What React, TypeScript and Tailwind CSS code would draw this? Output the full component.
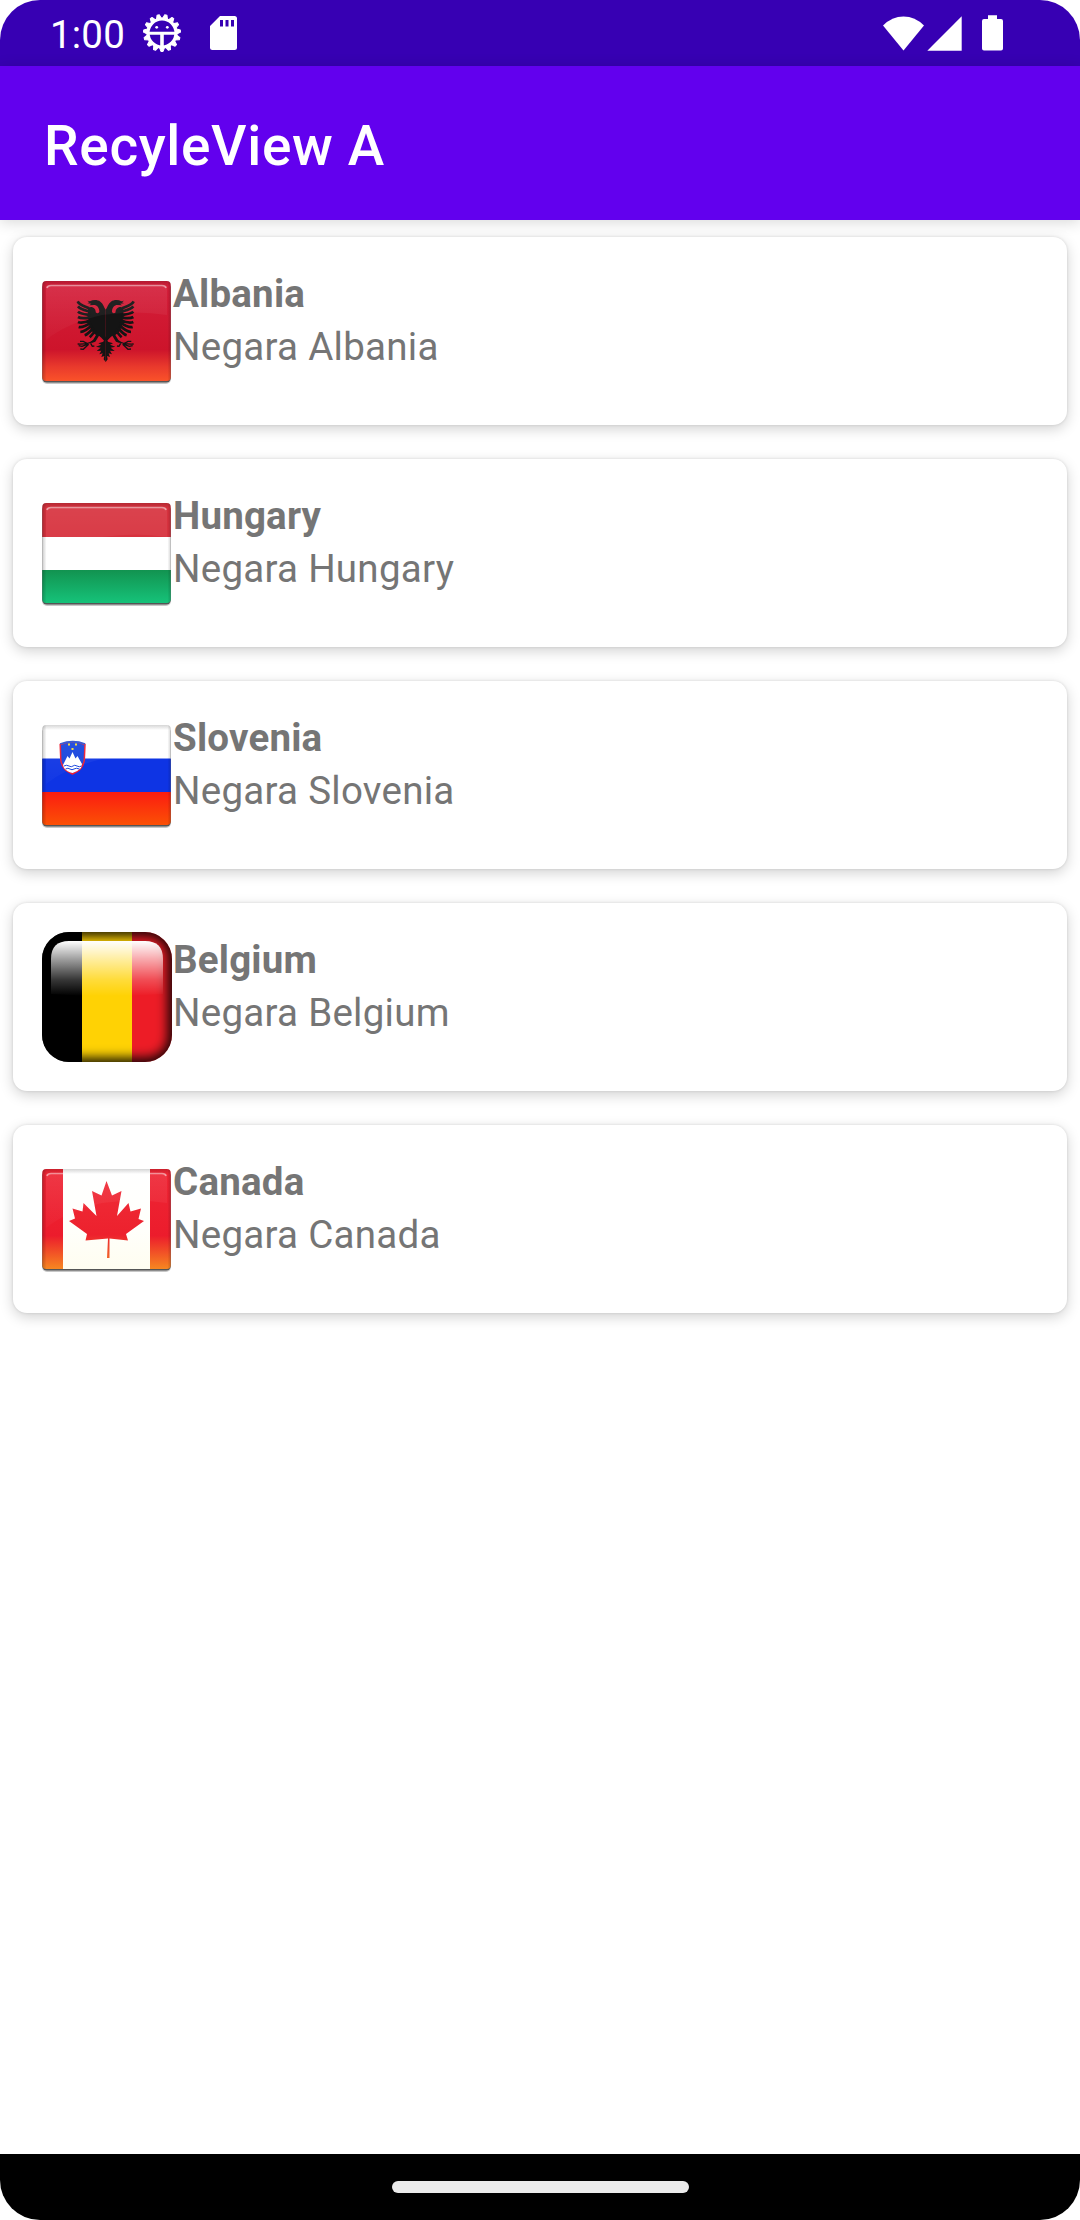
import React from "react";

type FlagProps = { children: React.ReactNode; id: string };

/* Glossy rectangular flag, drawn on a 130-unit square */
function GlossFlag({ children, id }: FlagProps) {
  return (
    <svg viewBox="0 0 130 130" className="h-[130px] w-[130px] shrink-0">
      <defs>
        <clipPath id={`${id}-clip`}>
          <rect x="0.3" y="15" width="128.4" height="100" rx="4" />
        </clipPath>
        <linearGradient id={`${id}-edge`} x1="0" x2="1" y1="0" y2="0">
          <stop offset="0" stopColor="#000" stopOpacity="0.22" />
          <stop offset="0.035" stopColor="#000" stopOpacity="0" />
          <stop offset="0.965" stopColor="#000" stopOpacity="0" />
          <stop offset="1" stopColor="#000" stopOpacity="0.22" />
        </linearGradient>
        <linearGradient id={`${id}-top`} x1="0" x2="0" y1="0" y2="1">
          <stop offset="0" stopColor="#000" stopOpacity="0.16" />
          <stop offset="0.05" stopColor="#000" stopOpacity="0" />
        </linearGradient>
        <linearGradient id={`${id}-shine`} x1="0" x2="0" y1="0" y2="1">
          <stop offset="0" stopColor="#fff" stopOpacity="0.08" />
          <stop offset="1" stopColor="#fff" stopOpacity="0.02" />
        </linearGradient>
      </defs>
      <rect x="0" y="17.5" width="129" height="100.5" rx="5" fill="#000" opacity="0.22" />
      <rect x="0.3" y="17" width="128.4" height="99.6" rx="4.5" fill="#555" />
      <g clipPath={`url(#${id}-clip)`}>
        {children}
        <path d="M4 20H125V49Q95 44 60 49Q25 57 4 74Z" fill={`url(#${id}-shine)`} />
        <path
          d="M5 22Q5.500 19.500 9 19.500H120Q123.500 19.500 124 22"
          fill="none"
          stroke="#fff"
          strokeOpacity="0.5"
          strokeWidth="1.6"
        />
        <rect y="15" width="130" height="101" fill={`url(#${id}-edge)`} />
        <rect y="15" width="130" height="101" fill={`url(#${id}-top)`} />
      </g>
    </svg>
  );
}

function EagleHalf() {
  return (
    <g>
      <path d="M137 74C132 68 130 56 121 50C112 44 99 44 90 49L82 47L88 52L82 55L94 56L88 61L101 60C112 60 117 68 118 78C119 84 112 87 107 82C108 74 102 66 92 66C84 68 82 76 84 84C80 92 84 98 86 104L89 124C92 136 100 146 108 150L99 165L92 170L97 173L106 170L117 152L124 158L131 166H137Z" />
      <path
        d="M53 49C58 60 72 63 88 70M54 64C62 74 76 76 90 80M54 80C62 88 76 88 90 90M54 96C64 102 78 99 90 98M54 111C64 116 80 111 92 106M56 126C66 129 82 120 94 112M61 141C74 140 86 130 96 120M74 151C84 148 92 138 101 128M89 157C95 152 100 144 107 136"
        fill="none"
        stroke="#141414"
        strokeWidth="8"
      />
      <path
        d="M100 168C88 176 76 178 53 177M84 177L70 169L60 169M82 178L66 184L56 182M86 178L70 193L61 192M92 175L97 184L103 183"
        fill="none"
        stroke="#141414"
        strokeWidth="4"
      />
      <path d="M137 154L130 170L115 175L124 179L108 185L122 188L110 198L124 197L118 208L128 205L124 216L133 213L131 223L137 231Z" />
    </g>
  );
}

function Albania() {
  return (
    <GlossFlag id="al">
      <defs>
        <linearGradient id="al-bg" x1="0" x2="0" y1="0" y2="1">
          <stop offset="0" stopColor="#d41f3b" />
          <stop offset="0.68" stopColor="#cd142b" />
          <stop offset="0.85" stopColor="#e93a2c" />
          <stop offset="1" stopColor="#fb5429" />
        </linearGradient>
      </defs>
      <rect y="15" width="130" height="101" fill="url(#al-bg)" />
      <g transform="translate(18 19) scale(.3333)" fill="#141414">
        <EagleHalf />
        <g transform="translate(274 0) scale(-1 1)">
          <EagleHalf />
        </g>
      </g>
    </GlossFlag>
  );
}

function Hungary() {
  return (
    <GlossFlag id="hu">
      <defs>
        <linearGradient id="hu-green" x1="0" x2="0" y1="0" y2="1">
          <stop offset="0" stopColor="#129350" />
          <stop offset="1" stopColor="#16c47b" />
        </linearGradient>
      </defs>
      <rect y="15" width="130" height="34" fill="#d7323e" />
      <rect y="49" width="130" height="33" fill="#fff" />
      <rect y="82" width="130" height="34" fill="url(#hu-green)" />
    </GlossFlag>
  );
}

function Slovenia() {
  return (
    <GlossFlag id="si">
      <defs>
        <linearGradient id="si-red" x1="0" x2="0" y1="0" y2="1">
          <stop offset="0" stopColor="#fb1c10" />
          <stop offset="1" stopColor="#fb5205" />
        </linearGradient>
      </defs>
      <rect y="15" width="130" height="34" fill="#fff" />
      <rect y="48.500" width="130" height="33.500" fill="#0e34e4" />
      <rect y="82" width="130" height="34" fill="url(#si-red)" />
      <path
        d="M18.200 34.500Q31 29.500 43 34.500L42.300 50Q41 60 30.500 64Q20 60 18.800 50Z"
        fill="#1744dd"
        stroke="#ef1c30"
        strokeWidth="1.500"
      />
      <path d="M18.200 34Q31 29.500 43 34" fill="none" stroke="#2a4fd0" strokeWidth="1.800" />
      <path d="M21 55L25.500 46L27.500 48.500L30.500 42L33.500 48.500L35.500 46L40 54L39 58Q35 62 30.500 63Q25 62 22 58Z" fill="#fff" />
      <path
        d="M22 56Q24.500 54.500 27 56T31 56T35 56T39.500 56M23.500 59Q26 57.500 28 59T32 59T37.500 59"
        fill="none"
        stroke="#1744dd"
        strokeWidth="1"
      />
      <g fill="#f7dc2c">
        <rect x="26" y="33.500" width="2" height="2" />
        <rect x="33" y="33.500" width="2" height="2" />
        <rect x="29.500" y="38" width="2" height="2" />
      </g>
    </GlossFlag>
  );
}

function Belgium() {
  return (
    <svg viewBox="0 0 130 130" className="h-[130px] w-[130px] shrink-0">
      <defs>
        <clipPath id="be-clip">
          <rect width="130" height="130" rx="27" />
        </clipPath>
        <linearGradient id="be-gloss" x1="0" x2="0" y1="0" y2="1">
          <stop offset="0" stopColor="#fff" stopOpacity="1" />
          <stop offset="0.35" stopColor="#fff" stopOpacity="0.6" />
          <stop offset="0.7" stopColor="#fff" stopOpacity="0.22" />
          <stop offset="1" stopColor="#fff" stopOpacity="0" />
        </linearGradient>
        <filter id="be-blur" x="-20%" y="-20%" width="140%" height="140%">
          <feGaussianBlur stdDeviation="6" />
        </filter>
      </defs>
      <g clipPath="url(#be-clip)">
        <rect width="40" height="130" />
        <rect x="40" width="50" height="130" fill="#ffd204" />
        <rect x="90" width="40" height="130" fill="#ed1c26" />
        <rect
          x="-3"
          y="-3"
          width="136"
          height="136"
          rx="28"
          fill="none"
          stroke="#000"
          strokeOpacity="0.95"
          strokeWidth="14"
          filter="url(#be-blur)"
        />
        <path d="M9 62V27Q9 9 27 9H103Q121 9 121 27V62Q65 66 9 62Z" fill="url(#be-gloss)" />
      </g>
    </svg>
  );
}

function Canada() {
  return (
    <GlossFlag id="ca">
      <defs>
        <linearGradient id="ca-red" x1="0" x2="0" y1="0" y2="1">
          <stop offset="0" stopColor="#ee2635" />
          <stop offset="0.66" stopColor="#ec1c2c" />
          <stop offset="1" stopColor="#f78a20" />
        </linearGradient>
        <linearGradient id="ca-leaf" gradientUnits="userSpaceOnUse" x1="0" y1="27" x2="0" y2="104">
          <stop offset="0" stopColor="#ef2c38" />
          <stop offset="0.7" stopColor="#ed212d" />
          <stop offset="1" stopColor="#f2652a" />
        </linearGradient>
        <linearGradient id="ca-white" x1="0" x2="0" y1="0" y2="1">
          <stop offset="0" stopColor="#fff" />
          <stop offset="0.6" stopColor="#fffffb" />
          <stop offset="1" stopColor="#fffdf0" />
        </linearGradient>
      </defs>
      <rect y="15" width="130" height="101" fill="url(#ca-red)" />
      <rect x="21" y="15" width="87" height="101" fill="url(#ca-white)" />
      <path
        d="M64.500 27L70 41.500L79.500 37L75 62L86.500 49L88.500 57.500L99 54.500L96.500 65L102 67L84 80L86 86.500L67.500 84.500L67.500 104H65L66 84.500L43.500 86.500L45 80L27 67L33 64.500L30.500 54.500L40.500 57.500L41.500 49L54.500 62L50 37L59.500 41.500Z"
        fill="url(#ca-leaf)"
      />
    </GlossFlag>
  );
}

const countries = [
  { name: "Albania", Flag: Albania },
  { name: "Hungary", Flag: Hungary },
  { name: "Slovenia", Flag: Slovenia },
  { name: "Belgium", Flag: Belgium },
  { name: "Canada", Flag: Canada },
];

const teeth = Array.from({ length: 15 }, (_, i) => i * 24 + 12);

function GearIcon() {
  return (
    <svg viewBox="0 0 40 40" className="ml-[17px] h-10 w-10">
      <g fill="#fff" stroke="#fff" strokeWidth="1" strokeLinejoin="round">
        {teeth.map((a) => (
          <path key={a} d="M17.300 6L18.900 1.500H21.100L22.700 6Z" transform={`rotate(${a} 20 20)`} />
        ))}
      </g>
      <circle cx="20" cy="20" r="14" fill="none" stroke="#fff" strokeWidth="3.200" />
      <path d="M6 20.300H34" stroke="#fff" strokeWidth="3" />
      <path d="M20 20V35" stroke="#fff" strokeWidth="3.600" />
      <circle cx="14.700" cy="14.300" r="1.400" fill="#fff" />
      <circle cx="25.300" cy="14.300" r="1.400" fill="#fff" />
    </svg>
  );
}

function StatusBar() {
  return (
    <div className="flex h-[66px] items-center bg-[#3700b3] text-white">
      <span className="ml-[50px] pt-[3px] text-[38.5px] leading-[63px] tracking-[0.2px]">1:00</span>
      <GearIcon />
      <svg viewBox="0 0 27 34" className="ml-[28px] h-[34px] w-[27px]">
        <path
          fill="#fff"
          fillRule="evenodd"
          d="M10 0H24.500Q27 0 27 2.500V31.500Q27 34 24.500 34H2.500Q0 34 0 31.500V10ZM10 4V10.500H13V4ZM15.500 4V10.500H18.500V4ZM21 4V10.500H24V4Z"
        />
      </svg>
      <svg viewBox="0 0 41 35" className="ml-auto h-[35px] w-[41px]">
        <path fill="#fff" d="M0 9.500Q9 0.500 20.500 0.500T41 9.500L20.500 34.500Z" />
      </svg>
      <svg viewBox="0 0 35 35" className="ml-[3px] h-[35px] w-[35px]">
        <path fill="#fff" d="M0.300 34.700L34.700 0.300V34.700Z" />
      </svg>
      <svg viewBox="0 0 21 36" className="mr-[77px] ml-[20px] h-9 w-[21px]">
        <path
          fill="#fff"
          d="M6 0.300H15V4H19Q21 4 21 6V33.500Q21 35.500 19 35.500H2Q0 35.500 0 33.500V6Q0 4 2 4H6Z"
        />
      </svg>
    </div>
  );
}

export default function App() {
  return (
    <div className="h-[2220px] w-[1080px] bg-white">
      <div className="flex h-full flex-col overflow-hidden rounded-[40px] bg-white font-[Roboto,sans-serif]">
        <StatusBar />
        <header className="flex h-[154px] items-center bg-[#6200ee] pl-[44px] shadow-[0_2px_14px_rgba(0,0,0,0.16)]">
          <h1 className="pt-[6px] text-[55px] leading-[56px] font-medium tracking-[0.65px] text-white">
            RecyleView A
          </h1>
        </header>
        <main className="flex flex-1 flex-col gap-[34px] px-[13px] pt-[17px]">
          {countries.map(({ name, Flag }) => (
            <article
              key={name}
              className="flex h-[188px] rounded-[14px] bg-white p-[29px] shadow-[0_4px_14px_rgba(0,0,0,0.18),0_0_3px_rgba(0,0,0,0.12)]"
            >
              <Flag />
              <div className="pt-px pl-px text-[38.5px] leading-[53px] text-[#757575]">
                <h2 className="font-bold tracking-[0.2px]">{name}</h2>
                <p className="tracking-[0.27px]">Negara {name}</p>
              </div>
            </article>
          ))}
        </main>
        <nav className="flex h-[66px] items-center justify-center bg-black">
          <div className="h-[12px] w-[297px] rounded-full bg-[#ebebeb]" />
        </nav>
      </div>
    </div>
  );
}
